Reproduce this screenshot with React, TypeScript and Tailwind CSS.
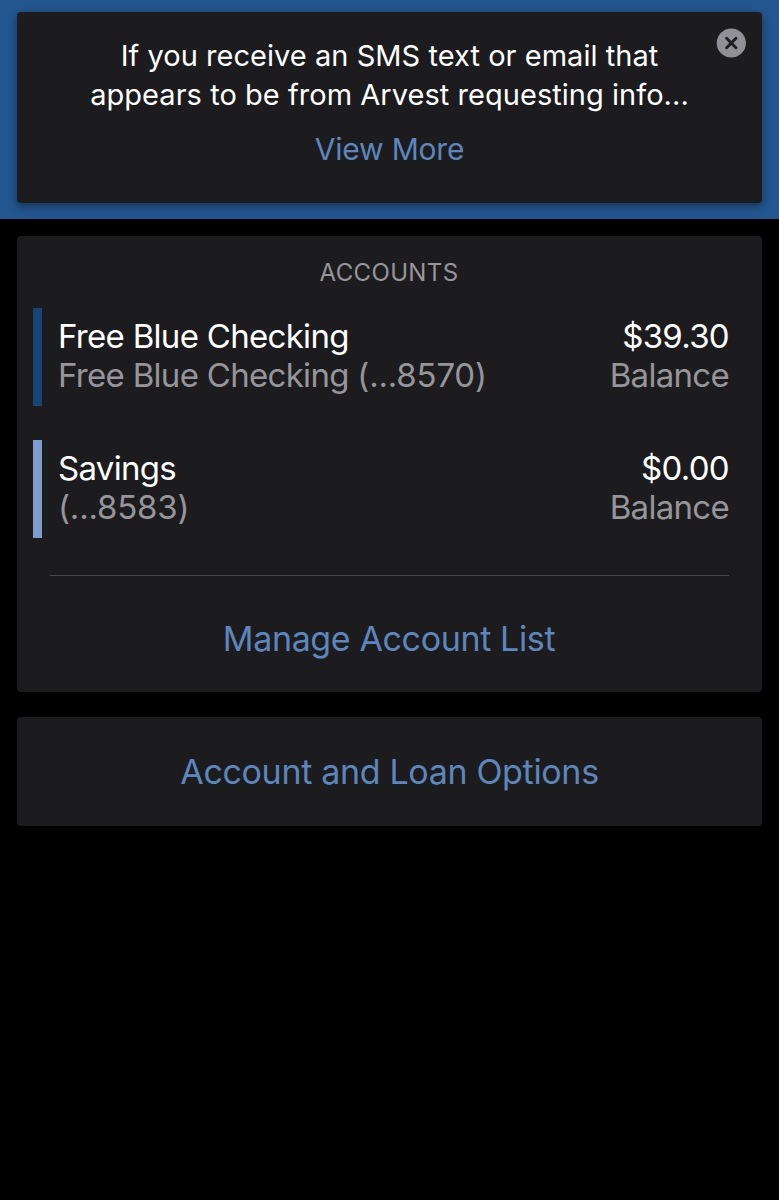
interface Account {
  id: string;
  name: string;
  label: string;
  mask: string;
  balance: string;
  barClass: string;
}

const accounts: Account[] = [
  {
    id: "checking",
    name: "Free Blue Checking",
    label: "Free Blue Checking ",
    mask: "(...8570)",
    balance: "$39.30",
    barClass: "bg-[#184477]",
  },
  {
    id: "savings",
    name: "Savings",
    label: "",
    mask: "(...8583)",
    balance: "$0.00",
    barClass: "bg-[#7c9ccb]",
  },
];

function CloseIcon() {
  return (
    <svg viewBox="0 0 30 30" className="h-[30px] w-[30px]" aria-hidden="true">
      <circle cx="15.3" cy="15" r="14.6" fill="#919096" />
      <path d="M10.6 10.3l9.4 9.4M20 10.3l-9.4 9.4" stroke="#1f1f24" strokeWidth="3" strokeLinecap="round" />
    </svg>
  );
}

function Notice() {
  return (
    <div className="h-[219px] bg-[#23558f] px-[17px] pt-3">
      <div className="relative h-[191px] rounded bg-[#1c1c1e] pt-6 text-center shadow-[0_3px_8px_rgba(0,0,0,0.4)]">
        <p className="text-[29px] leading-[39px] tracking-[0.04px] text-white">
          If you receive an SMS text or email that
          <br />
          appears to be from Arvest requesting info...
        </p>
        <button className="mt-[15px] block w-full text-[30px] leading-[40px] tracking-[-0.2px] text-[#5d86bd]">
          View More
        </button>
        <button aria-label="Close" className="absolute top-4 right-4">
          <CloseIcon />
        </button>
      </div>
    </div>
  );
}

function AccountRow({ account }: { account: Account }) {
  return (
    <div className="flex h-[98px]">
      <div className={`w-[9px] ${account.barClass}`} />
      <div className="flex flex-1 justify-between pt-[9px] pr-4 pl-4 text-[33px] leading-[39px] tracking-[-0.7px]">
        <div>
          <div className="text-white">{account.name}</div>
          <div className="whitespace-pre text-[#96959b]">
            {account.label}
            <span className="tracking-[-0.2px]">{account.mask}</span>
          </div>
        </div>
        <div className="text-right">
          <div className="text-white">{account.balance}</div>
          <div className="text-[#96959b]">Balance</div>
        </div>
      </div>
    </div>
  );
}

export default function App() {
  return (
    <div className="min-h-[1200px] bg-black font-['Inter','Liberation_Sans',sans-serif]">
      <Notice />
      <div className="mx-[17px] mt-[17px] h-[456px] rounded bg-[#1c1c1e] pr-[17px] pl-4">
        <h2 className="pt-[21px] text-center text-[24px] leading-[32px] tracking-[0.35px] text-[#96959b]">
          ACCOUNTS
        </h2>
        <div className="mt-[19px] flex flex-col gap-[33.5px]">
          {accounts.map((account) => (
            <AccountRow key={account.id} account={account} />
          ))}
        </div>
        <div className="mt-[37.5px] mr-4 ml-[17px] h-px bg-[#48484a]" />
        <button className="mt-[43px] block w-full text-[34px] leading-[40px] tracking-[-0.37px] text-[#5d86bd]">
          Manage Account List
        </button>
      </div>
      <div className="mx-[17px] mt-[25px] flex h-[109px] items-center justify-center rounded bg-[#1c1c1e]">
        <button className="text-[34px] leading-[40px] tracking-[-0.33px] text-[#5d86bd]">
          Account and Loan Options
        </button>
      </div>
    </div>
  );
}
